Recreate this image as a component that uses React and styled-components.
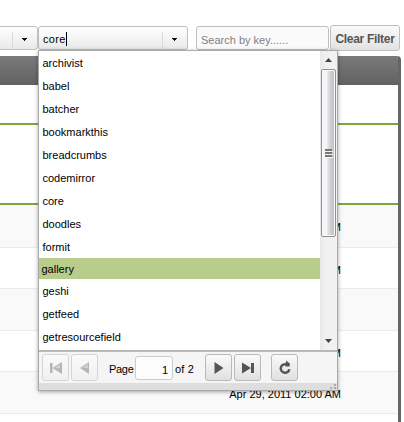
import React from "react";
import styled, { createGlobalStyle } from "styled-components";

const Global = createGlobalStyle`
  * { box-sizing: border-box; }
  body { margin: 0; background: #fff; font: 11px "Liberation Sans", Arial, sans-serif; color: #000; overflow: hidden; }
`;
const Page = styled.main`
  position: relative;
  width: 404px;
  height: 422px;
  overflow: hidden;
  padding-top: 25px;
`;
const Toolbar = styled.div`
  display: flex;
  align-items: center;
  height: 26px;
`;
const Combo = styled.div`
  display: flex;
  align-items: center;
  width: ${(p) => p.$width}px;
  margin-left: ${(p) => p.$offset || 0}px;
  flex: none;
  height: 24px;
  border: 1px solid #bfbfbf;
  border-radius: 3px;
  background: linear-gradient(#fff, #e9e9e9);
`;
const Value = styled.span`
  flex: 1;
  padding-left: 4px;
  padding-top: 2px;
  letter-spacing: 0.3px;
  line-height: 18px;
`;
const Caret = styled.i`
  display: inline-block;
  width: 1px;
  height: 14px;
  background: #000;
  vertical-align: -3px;
`;
const Trigger = styled.span`
  display: flex;
  align-items: center;
  justify-content: center;
  width: 25px;
  height: 18px;
  margin-top: 5px;
  padding: 0 2px 2px 0;
  border-left: 1px solid #d9d9d9;
`;
const Search = styled.div`
  width: 133px;
  height: 24px;
  margin-left: 8px;
  padding: 2px 4px 0;
  border: 1px solid #bfbfbf;
  border-radius: 3px;
  background: #fafafa;
  color: #808080;
  line-height: 22px;
`;
const ClearButton = styled.button`
  width: 70px;
  height: 26px;
  margin-left: 1px;
  padding: 2px 0 0;
  border: 1px solid #bfbfbf;
  border-radius: 3px;
  background: linear-gradient(#fafafa, #e2e2e2);
  color: #555;
  font: bold 12px "Liberation Sans", Arial, sans-serif;
  letter-spacing: -0.3px;
  white-space: nowrap;
`;
const Grid = styled.section`
  width: 401px;
  margin-top: 5px;
  border-right: 3px solid #666;
  border-radius: 0 4px 0 0;
  overflow: hidden;
`;
const GridHead = styled.div`
  height: 29px;
  background: linear-gradient(#7a7a7a, #626262);
`;
const Band = styled.div`
  height: ${(p) => p.$height}px;
  border-bottom: 2px solid #7fa63a;
`;
const GridRow = styled.div`
  height: ${(p) => p.$height}px;
  padding-right: 57px;
  border-bottom: 1px solid #ebebeb;
  background: ${(p) => (p.$odd ? "#f9f9f9" : "#fff")};
  text-align: right;
  line-height: 44px;
`;
const Dropdown = styled.div`
  position: absolute;
  left: 38px;
  top: 50px;
  width: 300px;
  height: 341px;
  border: 1px solid #aaa;
  background: #fff;
  box-shadow: 0 1px 4px rgba(0, 0, 0, 0.35);
`;
const ListArea = styled.div`
  display: flex;
  height: 299px;
`;
const List = styled.div`
  width: 281px;
`;
const Item = styled.div`
  height: ${(p) => (p.$active ? 21 : 23)}px;
  padding-left: ${(p) => (p.$active ? 2.5 : 3.5)}px;
  background: ${(p) => (p.$active ? "#b8cc8c" : "transparent")};
  line-height: ${(p) => (p.$active ? 22 : 24)}px;
`;
const Scrollbar = styled.div`
  display: flex;
  flex-direction: column;
  width: 17px;
  background: linear-gradient(90deg, #e8e8e8, #f0f0f0 5px, #f2f2f2);
`;
const ScrollArrow = styled.div`
  height: 18px;
  display: flex;
  align-items: center;
  justify-content: center;
`;
const Thumb = styled.div`
  display: flex;
  align-items: center;
  justify-content: center;
  width: 15px;
  height: 168px;
  margin: 0 1px auto;
  border: 1px solid #8f8f8f;
  border-radius: 2px;
  box-shadow: inset 0 0 0 1px #fafafa;
  background: linear-gradient(90deg, #f5f5f5 0 35%, #e0e0e3 48%, #c1c1c8 85%, #d2d2d7);
`;
const Pager = styled.div`
  display: flex;
  align-items: center;
  height: 33px;
  padding: 0 3px;
  border-top: 2px solid #b8b8b8;
  background: #f5f5f5;
`;
const PageButton = styled.button`
  display: flex;
  align-items: center;
  justify-content: center;
  width: 27px;
  height: 27px;
  margin-right: ${(p) => p.$gap ?? 2}px;
  padding: 0;
  flex: none;
  border: 1px solid ${(p) => (p.disabled ? "#d5d5d5" : "#b9b9b9")};
  border-radius: 3px;
  background: ${(p) => (p.disabled ? "linear-gradient(#fafafa, #f0f0f0)" : "linear-gradient(#fafafa, #e0e0e0)")};
`;
const PageLabel = styled.span`
  width: 26px;
  padding-top: 2px;
  letter-spacing: -0.3px;
`;
const PageInput = styled.span`
  width: 38px;
  height: 24px;
  padding: 2px 4px 0 0;
  border: 1px solid #cbcbcb;
  border-radius: 3px;
  background: #fcfcfc;
  text-align: right;
  line-height: 22px;
`;
const PageTotal = styled.span`
  width: 32px;
  padding: 2px 0 0 2px;
  letter-spacing: 0.2px;
  white-space: nowrap;
`;
const Footer = styled.div`
  display: flex;
  justify-content: flex-end;
  height: 7px;
  background: #dedede;
`;

const Down = () => (
  <svg width="5" height="3" viewBox="0 0 5 3" shapeRendering="crispEdges">
    <path d="M0 0h5v1H4v1H3v1H2V2H1V1H0z" fill="#111" />
  </svg>
);
const ScrollGlyph = ({ up }) => (
  <svg width="7" height="4" viewBox="0 0 7 4">
    <path d={up ? "M0 4L3.5 0 7 4z" : "M0 0h7L3.5 4z"} fill="#444" />
  </svg>
);
const Grip = () => (
  <svg width="8" height="9" viewBox="0 0 8 9" shapeRendering="crispEdges">
    <path d="M0 0h7v2H0zM0 3h7v2H0zM0 6h7v2H0z" fill="#777" />
    <path d="M1 2h7v1H1zM1 5h7v1H1zM1 8h7v1H1z" fill="#f4f4f4" />
  </svg>
);
const FirstIcon = () => (
  <svg width="12" height="12" viewBox="0 0 12 12">
    <path d="M0 1h2.5v10H0zM2.5 6L12 0v12z" fill="#b5b5b5" />
    <path d="M5 6l5-3.5v4z" fill="#d5d5d5" />
  </svg>
);
const PrevIcon = () => (
  <svg width="9" height="12" viewBox="0 0 9 12">
    <path d="M0 6l9-6v12z" fill="#b5b5b5" />
    <path d="M2 6l6-4v4z" fill="#d2d2d2" />
  </svg>
);
const NextIcon = () => (
  <svg width="10" height="12" viewBox="0 0 10 12">
    <path d="M0.5 0l9 6-9 6z" fill="#555" />
  </svg>
);
const LastIcon = () => (
  <svg width="12" height="12" viewBox="0 0 12 12">
    <path d="M0 .5L9 6 0 11.5zM9 1h3v10H9z" fill="#555" />
  </svg>
);
const RefreshIcon = () => (
  <svg width="14" height="15" viewBox="0 0 14 15">
    <path d="M8.5 4.2H7a4.3 4.3 0 1 0 4.3 5" fill="none" stroke="#555" strokeWidth="2.5" />
    <path d="M8.2.6l3.8 3.2-.4 2.6H7.4z" fill="#555" />
  </svg>
);
const ResizeGrip = () => (
  <svg width="7" height="7" viewBox="0 0 7 7" shapeRendering="crispEdges">
    <path d="M4 1h2v2H4zM0 4h2v2H0zM4 4h2v2H4z" fill="#aaa" />
  </svg>
);

const items = ["archivist", "babel", "batcher", "bookmarkthis", "breadcrumbs", "codemirror", "core", "doodles", "formit", "gallery", "geshi", "getfeed", "getresourcefield"];
const date = "Apr 29, 2011 02:00 AM";
const rows = [
  { height: 43, text: date },
  { height: 41, text: date },
  { height: 42, text: "" },
  { height: 41, text: date },
  { height: 42, text: date },
  { height: 41, text: "" },
];

export default function App() {
  return (
    <Page>
      <Global />
      <Toolbar>
        <Combo $width={43} $offset={-5}><Value /><Trigger><Down /></Trigger></Combo>
        <Combo $width={150}><Value>core<Caret /></Value><Trigger><Down /></Trigger></Combo>
        <Search>Search by key......</Search>
        <ClearButton>Clear Filter</ClearButton>
      </Toolbar>
      <Grid>
        <GridHead />
        <Band $height={40} />
        <Band $height={80} />
        {rows.map((r, i) => <GridRow key={i} $height={r.height} $odd={i % 2 === 0}>{r.text}</GridRow>)}
      </Grid>
      <Dropdown>
        <ListArea>
          <List>{items.map((name) => <Item key={name} $active={name === "gallery"}>{name}</Item>)}</List>
          <Scrollbar>
            <ScrollArrow><ScrollGlyph up /></ScrollArrow>
            <Thumb><Grip /></Thumb>
            <ScrollArrow><ScrollGlyph /></ScrollArrow>
          </Scrollbar>
        </ListArea>
        <Pager>
          <PageButton disabled><FirstIcon /></PageButton>
          <PageButton disabled $gap={11}><PrevIcon /></PageButton>
          <PageLabel>Page</PageLabel>
          <PageInput>1</PageInput>
          <PageTotal>of 2</PageTotal>
          <PageButton><NextIcon /></PageButton>
          <PageButton $gap={10}><LastIcon /></PageButton>
          <PageButton><RefreshIcon /></PageButton>
        </Pager>
        <Footer><ResizeGrip /></Footer>
      </Dropdown>
    </Page>
  );
}
